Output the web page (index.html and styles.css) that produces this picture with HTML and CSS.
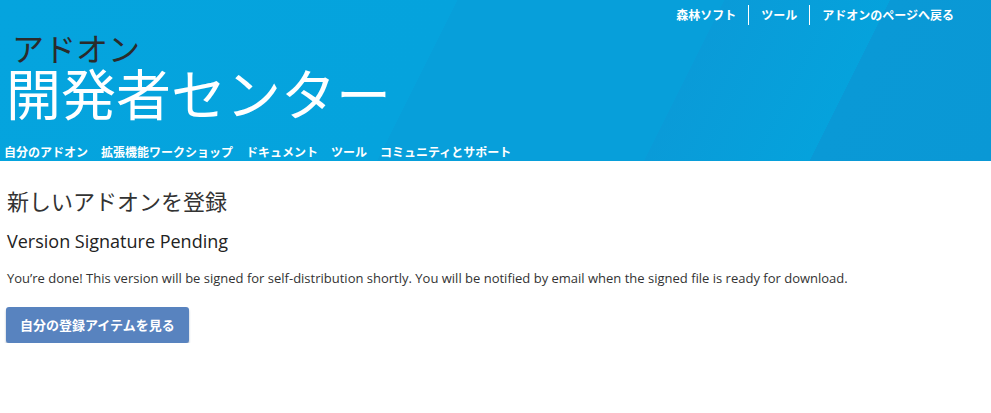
FILE: index.html
```html
<!DOCTYPE html>
<html lang="ja">
<head>
<meta charset="utf-8">
<title>アドオン開発者センター</title>
<link rel="stylesheet" href="styles.css">
</head>
<body>
<header class="site-header">
  <nav class="top-links">
    <a class="top-link" href="#">森林ソフト</a>
    <a class="top-link sep" href="#">ツール</a>
    <a class="top-link sep" href="#">アドオンのページへ戻る</a>
  </nav>
  <div class="brand">
    <div class="brand-small">アドオン</div>
    <div class="brand-large">開発者センター</div>
  </div>
  <nav class="main-nav">
    <a href="#">自分のアドオン</a>
    <a href="#">拡張機能ワークショップ</a>
    <a href="#">ドキュメント</a>
    <a href="#">ツール</a>
    <a href="#">コミュニティとサポート</a>
  </nav>
</header>
<main class="content">
  <h1 class="page-title">新しいアドオンを登録</h1>
  <h2 class="section-title">Version Signature Pending</h2>
  <p class="message">You’re done! This version will be signed for self-distribution shortly. You will be notified by email when the signed file is ready for download.</p>
  <a class="button" href="#">自分の登録アイテムを見る</a>
</main>
</body>
</html>
```

FILE: styles.css
```css
* { box-sizing: border-box; }
html, body { margin: 0; padding: 0; background: #fff; }
body {
  font-family: "Open Sans", "Noto Sans CJK JP", sans-serif;
  color: #333;
}
a { text-decoration: none; color: inherit; }

.site-header {
  height: 161px;
  padding: 5px 0 0 4px;
  display: flex;
  flex-direction: column;
  background: linear-gradient(116.57deg,
    #05a4de 0px, #05a3dd 409px,
    #079fda 409px, #079fda 648px,
    #0a9bd8 648px, #05a2dc 796px,
    #0a99d6 796px, #0a98d5 100%);
  color: #fff;
  font-family: "Noto Sans CJK JP", sans-serif;
}

.top-links {
  display: flex;
  justify-content: flex-end;
  padding-right: 25px;
  height: 20px;
}
.top-link {
  font-size: 12px;
  font-weight: 700;
  line-height: 20px;
  padding: 0 12px;
  color: #fff;
}
.top-link.sep { border-left: 1px solid #fff; }

.brand { margin-top: 6px; padding-left: 8px; }
.brand-small {
  font-size: 32px;
  line-height: 32px;
  color: #2b2b2b;
}
.brand-large {
  font-size: 55px;
  line-height: 55px;
  margin-top: 1px;
  margin-left: -6px;
  color: #fff;
}

.main-nav {
  margin-top: 25px;
  display: flex;
  gap: 13px;
}
.main-nav a {
  font-size: 12px;
  font-weight: 700;
  line-height: 16px;
  color: #fff;
}

.content { padding: 0 7px; }
.page-title {
  margin: 26px 0 0;
  font-family: "Noto Sans CJK JP", sans-serif;
  font-size: 22px;
  font-weight: 400;
  line-height: 26px;
  color: #333;
}
.section-title {
  margin: 16px 0 0;
  font-size: 18px;
  font-weight: 400;
  line-height: 24px;
  color: #222;
}
.message {
  margin: 16px 0 0;
  font-size: 13px;
  line-height: 18px;
  color: #333;
}
.button {
  display: inline-block;
  margin: 20px 0 0 -1px;
  height: 36px;
  padding: 0 14px;
  line-height: 36px;
  font-family: "Noto Sans CJK JP", sans-serif;
  font-size: 13px;
  font-weight: 700;
  color: #fff;
  background: #5883bf;
  border-radius: 3px;
  box-shadow: 0 2px 2px rgba(40, 70, 120, 0.45);
}
```
